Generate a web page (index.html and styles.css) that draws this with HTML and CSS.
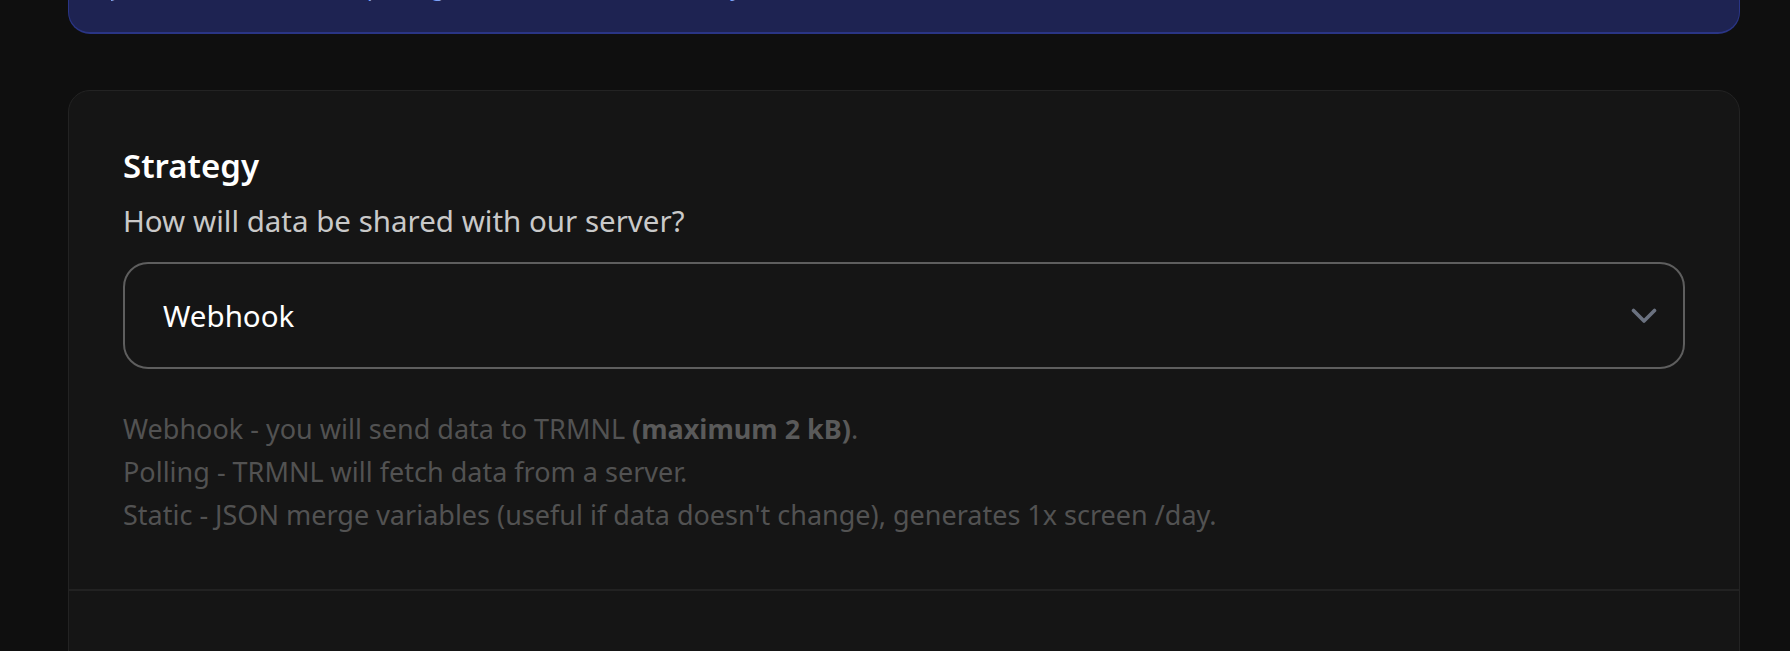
FILE: index.html
```html
<!DOCTYPE html>
<html lang="en">
<head>
<meta charset="utf-8">
<title>Strategy</title>
<link rel="stylesheet" href="styles.css">
</head>
<body>
<main class="page">
  <div class="notice">
    <p class="notice-text">just set all vars in the map and get it shown once a minute by TRMNL on the e-ink device it is linked to.</p>
  </div>

  <section class="card">
    <div class="card-section">
      <h2 class="title">Strategy</h2>
      <p class="subtitle">How will data be shared with our server?</p>
      <div class="select">
        <span class="select-value">Webhook</span>
        <svg class="chevron" width="26" height="16" viewBox="0 0 26 16" aria-hidden="true">
          <polyline points="2.5,2.5 13,13 23.5,2.5" fill="none" stroke="#6b7280" stroke-width="3.6" stroke-linecap="round" stroke-linejoin="round"/>
        </svg>
      </div>
      <div class="help">
        <p>Webhook - you will send data to TRMNL <strong>(maximum 2 kB)</strong>.</p>
        <p>Polling - TRMNL will fetch data from a server.</p>
        <p>Static - JSON merge variables (useful if data doesn't change), generates 1x screen /day.</p>
      </div>
    </div>
    <div class="card-section card-section-next"></div>
  </section>
</main>
</body>
</html>
```

FILE: styles.css
```css
* { box-sizing: border-box; }

html, body {
  margin: 0;
  padding: 0;
  background: #0f0f0f;
  height: 100%;
  overflow: hidden;
}

body {
  font-family: "Noto Sans", "Open Sans", "DejaVu Sans", sans-serif;
  color: #ffffff;
}

.page {
  padding: 0 50px 0 68px;
  display: flex;
  flex-direction: column;
  gap: 56px;
}

.notice {
  margin-top: -60px;
  height: 94px;
  background: #1e2352;
  border: 1px solid #2a3585;
  border-width: 0 1px 2px 1px;
  border-radius: 0 0 22px 22px;
  padding: 0 40px 0 42px;
  display: flex;
  align-items: flex-end;
}

.notice-text {
  margin: 0 0 27px 0;
  font-size: 22px;
  line-height: 36px;
  color: #7ea2f8;
  white-space: nowrap;
  overflow: hidden;
}

.card {
  background: #151515;
  border: 1px solid #232323;
  border-radius: 22px 22px 0 0;
  display: flex;
  flex-direction: column;
}

.card-section {
  padding: 55px 54px 53px 54px;
  display: flex;
  flex-direction: column;
}

.card-section-next {
  border-top: 2px solid #222222;
  height: 120px;
}

.title {
  margin: 0;
  font-size: 33px;
  line-height: 40px;
  font-weight: 600;
  color: #ffffff;
}

.subtitle {
  margin: 14px 0 0 0;
  font-size: 29.5px;
  line-height: 42px;
  color: #c9c9c9;
}

.select {
  margin-top: 20px;
  height: 107px;
  border: 2px solid #5e5e5e;
  border-radius: 25px;
  padding: 0 26px 0 38px;
  display: flex;
  align-items: center;
  justify-content: space-between;
}

.select-value {
  font-size: 29.5px;
  color: #ffffff;
}

.chevron { display: block; }

.help {
  margin-top: 38px;
  display: flex;
  flex-direction: column;
}

.help p {
  margin: 0;
  font-size: 27px;
  line-height: 43px;
  color: #525252;
}

.help strong {
  font-weight: 700;
  color: #5a5a5a;
}
```
